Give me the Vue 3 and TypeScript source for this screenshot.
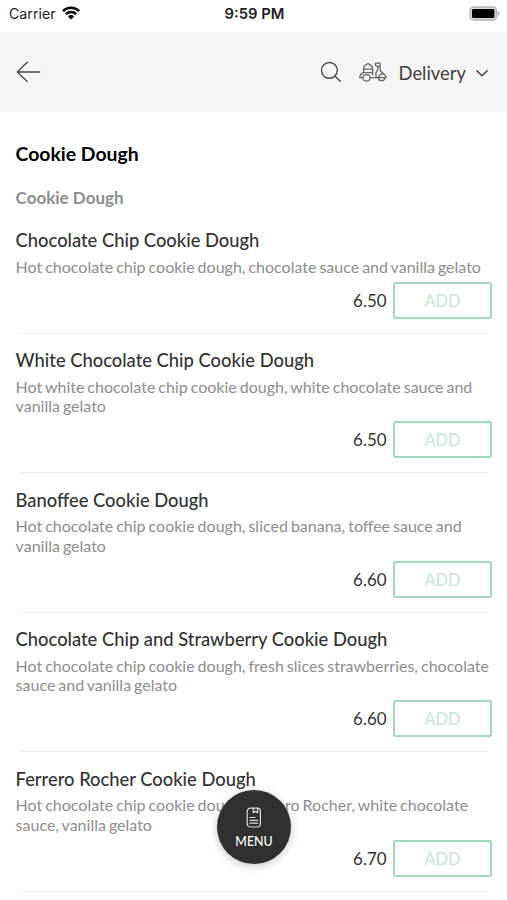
<script setup lang="ts">
interface MenuItem {
  name: string
  lines: string[]
  price: string
}

const items: MenuItem[] = [
  {
    name: 'Chocolate Chip Cookie Dough',
    lines: ['Hot chocolate chip cookie dough, chocolate sauce and vanilla gelato'],
    price: '6.50',
  },
  {
    name: 'White Chocolate Chip Cookie Dough',
    lines: ['Hot white chocolate chip cookie dough, white chocolate sauce and', 'vanilla gelato'],
    price: '6.50',
  },
  {
    name: 'Banoffee Cookie Dough',
    lines: ['Hot chocolate chip cookie dough, sliced banana, toffee sauce and', 'vanilla gelato'],
    price: '6.60',
  },
  {
    name: 'Chocolate Chip and Strawberry Cookie Dough',
    lines: ['Hot chocolate chip cookie dough, fresh slices strawberries, chocolate', 'sauce and vanilla gelato'],
    price: '6.60',
  },
  {
    name: 'Ferrero Rocher Cookie Dough',
    lines: ['Hot chocolate chip cookie dough, Ferrero Rocher, white chocolate', 'sauce, vanilla gelato'],
    price: '6.70',
  },
]
</script>

<template>
  <div class="screen">
    <div class="status">
      <div class="carrier">
        <span>Carrier</span>
        <svg class="wifi" width="18" height="14" viewBox="0 0 18 14">
          <g fill="none" stroke="#000" stroke-width="2.5">
            <path d="M.9 5.1a11.5 11.5 0 0 1 16.2 0" />
            <path d="M3.8 8.2a7.4 7.4 0 0 1 10.4 0" />
          </g>
          <path d="M9 13.6 5.9 10.4a4.4 4.4 0 0 1 6.2 0Z" />
        </svg>
      </div>
      <span class="clock">9:59 PM</span>
      <svg class="battery" width="31" height="15" viewBox="0 0 31 15">
        <rect x="1.1" y="1" width="26.4" height="13" rx="3.8" fill="#ddd" stroke="#b4b4b4" stroke-width="1.4" />
        <rect x="3" y="2.9" width="22.4" height="9.2" rx="1.4" />
        <path d="M28.7 5v5q1.8-1 1.8-2.5T28.7 5Z" fill="#aaa" />
      </svg>
    </div>

    <header class="bar">
      <svg class="back" width="26" height="24" viewBox="0 0 26 24">
        <path d="M23.6 12H1.3M11.2 2.2 1.3 12l9.9 9.6" fill="none" stroke="#4a4a4a" stroke-width="1.35" stroke-linecap="round" stroke-linejoin="round" />
      </svg>
      <svg class="search" width="22" height="22" viewBox="0 0 22 22">
        <g fill="none" stroke="#4a4a4a" stroke-width="1.4" stroke-linecap="round">
          <circle cx="9.4" cy="9.4" r="7.9" />
          <path d="m15.2 15.2 5 5" />
        </g>
      </svg>
      <svg class="scooter" width="28" height="20" viewBox="0 0 28 20">
        <g fill="none" stroke="#666" stroke-width="1.3" stroke-linecap="round" stroke-linejoin="round">
          <path d="M4.6 10.6V6.8a4.4 4.4 0 0 1 3-4.2q1.5-1.9 3 0a4.4 4.4 0 0 1 3 4.2v3.8Z" />
          <path d="M4.6 7.2h9M4.6 10.6Q.9 11.8.8 15.7h3m7.4 0h8.2M13.6 10.6v2.2" />
          <path d="M3.8 15.5a3.7 3.7 0 0 0 7.4 0q-.2-2.8-3.7-2.8t-3.7 2.8" />
          <path d="M16.6 1.1h4.4v3.4h-2.2l-2.2-1Zm2.2 3.4-.1 3.3-2 3.6.6 4.2m3.8-11.1.3 4.5 4.5 3.9q1.5 1.3.9 2.8h-7.3q.4-3.4 4.6-4.2" />
          <path d="M19.2 15.8a3.5 3.5 0 0 0 6.9 0" />
        </g>
      </svg>
      <span class="mode">Delivery</span>
      <svg class="chevron" width="14" height="9" viewBox="0 0 14 9">
        <path d="m1.8 1.8 5.2 5 5.2-5" fill="none" stroke="#444" stroke-width="1.5" stroke-linecap="round" stroke-linejoin="round" />
      </svg>
    </header>

    <main class="content">
      <h1>Cookie Dough</h1>
      <h2>Cookie Dough</h2>
      <section v-for="item in items" :key="item.name" class="item">
        <h3>{{ item.name }}</h3>
        <p><span v-for="line in item.lines" :key="line">{{ line }}</span></p>
        <div class="buy">
          <span class="price">{{ item.price }}</span>
          <button type="button">ADD</button>
        </div>
      </section>
    </main>

    <button class="menu" type="button">
      <svg width="16" height="22" viewBox="0 0 16 22">
        <g fill="none" stroke="#dedede" stroke-width="1.2" stroke-linecap="round" stroke-linejoin="round">
          <rect x="1.2" y="1.2" width="13.2" height="18.8" rx="3.2" />
          <path d="M7.3 1.4v4.2l2.2-1.2 2.2 1.2V1.4M4 10.5h5M4 13.3h7.7M4 16.2h7.7" />
        </g>
      </svg>
      <span>MENU</span>
    </button>
  </div>
</template>

<style>
body {
  background: #fff;
  overflow: hidden;
}
</style>

<style scoped>
.screen {
  position: relative;
  width: 507px;
  height: 900px;
  overflow: hidden;
  background: #fff;
  font-family: Lato, sans-serif;
  color: #333;
}
.status {
  display: grid;
  grid-template-columns: 1fr auto 1fr;
  align-items: center;
  height: 32px;
  padding: 0 7px 5px 9px;
  box-sizing: border-box;
  font-family: Inter, sans-serif;
  color: #222;
}
.carrier {
  display: flex;
  align-items: center;
  gap: 6px;
  font-size: 14.2px;
}
.wifi {
  margin-top: -2px;
}
.clock {
  font-size: 14.8px;
  font-weight: 600;
}
.battery {
  justify-self: end;
}
.bar {
  display: flex;
  align-items: center;
  height: 80px;
  padding: 0 18px 0 16px;
  box-sizing: border-box;
  background: #f6f6f6;
}
.search {
  margin-left: auto;
}
.scooter {
  margin-left: 17px;
}
.mode {
  margin-left: 12px;
  padding-top: 1px;
  font-size: 18.4px;
  line-height: 24px;
  color: #404040;
}
.chevron {
  margin: 3px 0 0 9px;
}
.content {
  padding: 30px 15px 0;
}
h1,
h2,
h3,
p {
  margin: 0;
  padding-left: 0.6px;
}
h1 {
  font-size: 19.4px;
  line-height: 24px;
  font-weight: 700;
  color: #000;
}
h2 {
  margin-top: 21px;
  font-size: 17px;
  line-height: 22px;
  font-weight: 700;
  color: #8e8e8e;
}
.item {
  padding: 14.4px 0 15px;
  background: linear-gradient(#eee, #eee) center bottom / calc(100% - 8px) 1px no-repeat;
}
h2 + .item {
  padding-top: 19px;
}
h3 {
  font-size: 18.35px;
  line-height: 24px;
  font-weight: 500;
  white-space: nowrap;
}
p {
  margin-top: 4.8px;
  font-size: 16px;
  line-height: 19.4px;
  word-spacing: -1.1px;
  color: #8e8e8e;
}
p span {
  display: block;
  white-space: nowrap;
}
.buy {
  display: flex;
  justify-content: flex-end;
  align-items: center;
  gap: 6.5px;
  margin-top: 5.5px;
}
.price {
  font-size: 16.9px;
}
.buy button {
  width: 99px;
  height: 37px;
  padding: 0;
  border: 2px solid #a5d9bd;
  border-radius: 2.5px;
  background: #fff;
  font: 16.3px Lato, sans-serif;
  color: #c8e6d7;
}
.menu {
  position: absolute;
  left: 217px;
  top: 790px;
  display: flex;
  flex-direction: column;
  align-items: center;
  gap: 5px;
  width: 74px;
  height: 74px;
  padding: 17px 0 0;
  border: 0;
  border-radius: 50%;
  background: #303030;
  box-shadow: 0 2px 8px rgba(0, 0, 0, 0.22);
  font: 500 12.4px/15px Lato, sans-serif;
  color: #fff;
}
</style>
